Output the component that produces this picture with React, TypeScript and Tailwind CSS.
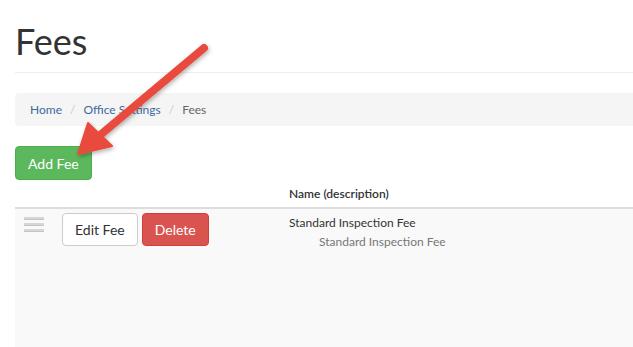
export default function App() {
  return (
    <div className="relative w-[633px] h-[347px] overflow-hidden bg-white font-['Lato',sans-serif] text-[#333]">
      <div className="pl-[15px]">
        {/* Page header */}
        <div className="pt-[21px] pb-[11px] border-b border-[#eee]">
          <h1 className="text-[36px] leading-[40px] font-normal">Fees</h1>
        </div>

        {/* Breadcrumb */}
        <nav className="mt-[20px] h-[33px] flex items-center gap-[8px] px-[15px] bg-[#f5f5f5] rounded-l-[4px] text-[12px]">
          <span className="text-[#3d6a9e]">Home</span>
          <span className="text-[#ccc]">/</span>
          <span className="text-[#3d6a9e]">Office Settings</span>
          <span className="text-[#ccc]">/</span>
          <span className="text-[#666]">Fees</span>
        </nav>

        {/* Add button */}
        <button className="mt-[20px] h-[34px] px-[12px] bg-[#5cb85c] border border-[#4cae4c] rounded-[4px] text-white text-[14px]">
          Add Fee
        </button>

        {/* Table */}
        <div className="grid grid-cols-[47px_227px_1fr] h-[29px] items-center border-b-2 border-[#ddd] text-[12px] font-semibold">
          <div />
          <div />
          <div>Name (description)</div>
        </div>
        <div className="grid grid-cols-[47px_227px_1fr] bg-[#f9f9f9] h-[200px] items-start">
          <div className="pl-[9px] pt-[8px] flex flex-col gap-[3px]">
            <div className="w-[20px] h-[3px] bg-[#d6d6d6] border-b border-[#c4c4c4]" />
            <div className="w-[20px] h-[3px] bg-[#d6d6d6] border-b border-[#c4c4c4]" />
            <div className="w-[20px] h-[3px] bg-[#d6d6d6] border-b border-[#c4c4c4]" />
          </div>
          <div className="pt-[4px] flex gap-[4px]">
            <button className="h-[33px] px-[12px] bg-white border border-[#ccc] rounded-[4px] text-[14px] text-[#333]">
              Edit Fee
            </button>
            <button className="h-[33px] px-[12px] bg-[#d9534f] border border-[#d43f3a] rounded-[4px] text-[14px] text-white">
              Delete
            </button>
          </div>
          <div className="pt-[4px] text-[12px] leading-[19px]">
            <div className="text-[#333]">Standard Inspection Fee</div>
            <div className="pl-[30px] text-[#777]">Standard Inspection Fee</div>
          </div>
        </div>
      </div>

      {/* Annotation arrow */}
      <svg className="absolute inset-0 pointer-events-none" width="633" height="347" viewBox="0 0 633 347">
        <defs>
          <filter id="sh" x="-20%" y="-20%" width="140%" height="140%">
            <feDropShadow dx="1" dy="2" stdDeviation="2" floodColor="#000" floodOpacity="0.3" />
          </filter>
        </defs>
        <g filter="url(#sh)" fill="#e84c3d" stroke="#e84c3d">
          <line x1="204" y1="48" x2="99" y2="136" strokeWidth="8" strokeLinecap="round" />
          <polygon points="78,154 88,123 112,146" strokeWidth="2" strokeLinejoin="round" />
        </g>
      </svg>
    </div>
  )
}
